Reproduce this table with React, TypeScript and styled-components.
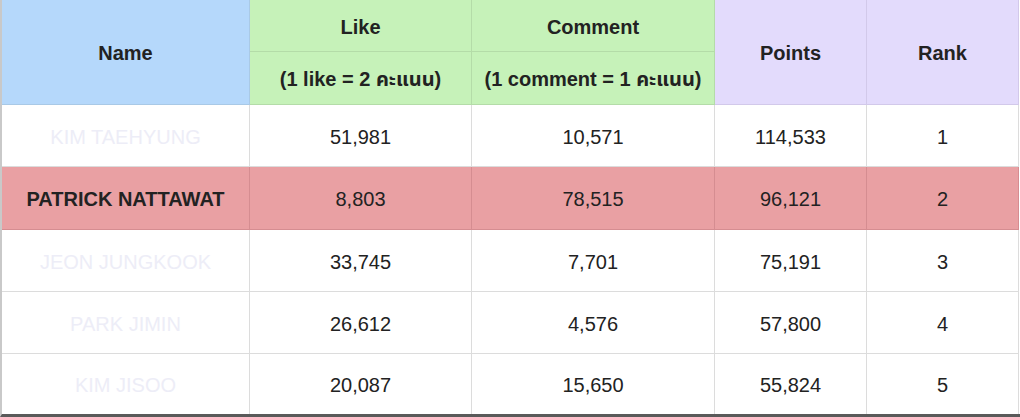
import React from "react";
import styled, { createGlobalStyle } from "styled-components";

const Global = createGlobalStyle`
  html, body { margin: 0; padding: 0; background: #ffffff; }
  body { font-family: "Liberation Sans", Arial, "Noto Sans Thai", "Noto Sans", sans-serif; }
`;

const Sheet = styled.div`
  width: 1020px;
  height: 417px;
  box-sizing: border-box;
  border-left: 2px solid #c9c9c9;
  border-bottom: 3px solid #5a5a5a;
  display: grid;
  grid-template-columns: 248px 222px 243px 152px 152px;
  grid-template-rows: 52px 53px 62px 63px 62px 62px 61px;
  overflow: hidden;
`;

type Tone = "blue" | "green" | "purple" | "white" | "pink";

const bg: Record<Tone, string> = {
  blue: "#b5d8fb",
  green: "#c6f2b9",
  purple: "#e3dbfc",
  white: "#ffffff",
  pink: "#e9a0a3",
};
const line: Record<Tone, string> = {
  blue: "#a9c9e6",
  green: "#b4dca8",
  purple: "#d2c9ea",
  white: "#dcdcdc",
  pink: "#d58d91",
};

const Cell = styled.div<{ $tone: Tone; $bold?: boolean; $span?: number; $faded?: boolean }>`
  box-sizing: border-box;
  display: flex;
  align-items: center;
  justify-content: center;
  text-align: center;
  padding-top: 3px;
  background: ${(p) => bg[p.$tone]};
  border-right: 1px solid ${(p) => line[p.$tone]};
  border-bottom: 1px solid ${(p) => line[p.$tone]};
  font-size: 20px;
  font-weight: ${(p) => (p.$bold ? 700 : 400)};
  color: ${(p) => (p.$faded ? "#ededf7" : "#222222")};
  white-space: nowrap;
  ${(p) => (p.$span ? `grid-row: span ${p.$span};` : "")}
`;

const rows = [
  { name: "KIM TAEHYUNG", like: "51,981", comment: "10,571", points: "114,533", rank: "1" },
  { name: "PATRICK NATTAWAT", like: "8,803", comment: "78,515", points: "96,121", rank: "2", hl: true },
  { name: "JEON JUNGKOOK", like: "33,745", comment: "7,701", points: "75,191", rank: "3" },
  { name: "PARK JIMIN", like: "26,612", comment: "4,576", points: "57,800", rank: "4" },
  { name: "KIM JISOO", like: "20,087", comment: "15,650", points: "55,824", rank: "5" },
];

export default function App() {
  return (
    <>
      <Global />
      <Sheet>
        <Cell $tone="blue" $bold $span={2}>Name</Cell>
        <Cell $tone="green" $bold>Like</Cell>
        <Cell $tone="green" $bold>Comment</Cell>
        <Cell $tone="purple" $bold $span={2}>Points</Cell>
        <Cell $tone="purple" $bold $span={2}>Rank</Cell>
        <Cell $tone="green" $bold>(1 like = 2 คะแนน)</Cell>
        <Cell $tone="green" $bold>(1 comment = 1 คะแนน)</Cell>
        {rows.map((r) => {
          const t: Tone = r.hl ? "pink" : "white";
          return (
            <React.Fragment key={r.name}>
              <Cell $tone={t} $bold={r.hl} $faded={!r.hl}>{r.name}</Cell>
              <Cell $tone={t}>{r.like}</Cell>
              <Cell $tone={t}>{r.comment}</Cell>
              <Cell $tone={t}>{r.points}</Cell>
              <Cell $tone={t}>{r.rank}</Cell>
            </React.Fragment>
          );
        })}
      </Sheet>
    </>
  );
}
